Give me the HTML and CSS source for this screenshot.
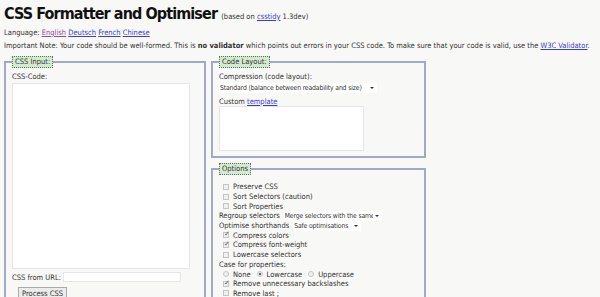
FILE: index.html
```html
<!DOCTYPE html>
<html lang="en">
<head>
    <meta charset="UTF-8">
    <title>CSS Formatter and Optimiser</title>
    <link rel="stylesheet" href="styles.css">
</head>
<body>
<h1>CSS Formatter and Optimiser <small>(based on <a href="#">csstidy</a> 1.3dev)</small></h1>

<p class="lang">Language: <a href="#" class="visited">English</a> <a href="#">Deutsch</a> <a href="#">French</a> <a href="#">Chinese</a></p>

<p class="note">Important Note: Your code should be well-formed. This is <b>no validator</b> which points out errors in your CSS code. To make sure that your code is valid, use the <a href="#">W3C Validator</a>.</p>

<div class="columns">
    <fieldset class="input-box">
        <legend>CSS Input:</legend>
        <label class="block">CSS-Code:</label>
        <textarea class="code"></textarea>
        <div class="url-row">
            <label>CSS from URL:</label>
            <input type="text" class="url">
        </div>
        <button type="button">Process CSS</button>
    </fieldset>

    <div class="side">
        <fieldset class="layout-box">
            <legend>Code Layout:</legend>
            <label class="block">Compression (code layout):</label>
            <span class="select wide"><select><option>Standard (balance between readability and size)</option></select></span>
            <label class="block custom">Custom <a href="#">template</a></label>
            <textarea class="template"></textarea>
        </fieldset>

        <fieldset class="options-box">
            <legend>Options</legend>
            <div class="opt"><input type="checkbox"><label>Preserve CSS</label></div>
            <div class="opt"><input type="checkbox"><label>Sort Selectors (caution)</label></div>
            <div class="opt"><input type="checkbox"><label>Sort Properties</label></div>
            <div class="opt plain"><label>Regroup selectors</label>
                <span class="select regroup"><select><option>Merge selectors with the same properties</option></select></span></div>
            <div class="opt plain"><label>Optimise shorthands</label>
                <span class="select short"><select><option>Safe optimisations</option></select></span></div>
            <div class="opt"><input type="checkbox" checked><label>Compress colors</label></div>
            <div class="opt"><input type="checkbox" checked><label>Compress font-weight</label></div>
            <div class="opt"><input type="checkbox"><label>Lowercase selectors</label></div>
            <div class="opt plain"><label>Case for properties:</label></div>
            <div class="opt radios">
                <input type="radio" name="case"><label>None</label>
                <input type="radio" name="case" checked><label>Lowercase</label>
                <input type="radio" name="case"><label>Uppercase</label>
            </div>
            <div class="opt"><input type="checkbox" checked><label>Remove unnecessary backslashes</label></div>
            <div class="opt"><input type="checkbox"><label>Remove last ;</label></div>
            <div class="opt"><input type="checkbox"><label>Discard invalid properties</label>
                <span class="select level"><select><option>CSS2.1</option></select></span></div>
        </fieldset>
    </div>
</div>
</body>
</html>
```

FILE: styles.css
```css
body {
    margin: 0;
    padding: 5px 4px;
    background-color: #f8f8f6;
    color: #333;
    font-family: "DejaVu Sans Condensed", "DejaVu Sans", Verdana, sans-serif;
    font-size: 7.5px;
}
a {
    color: #3b3bd6;
}
a.visited {
    color: #8d4a9e;
}
h1 {
    margin: 0;
    font-size: 16px;
    line-height: 18px;
    font-weight: bold;
    letter-spacing: -0.9px;
    color: #111;
}
h1 small {
    font-size: 7.5px;
    font-weight: normal;
    letter-spacing: 0;
    color: #333;
}
.lang {
    margin: 2px 0 0;
}
.note {
    margin: 4px 0 0;
}
.columns {
    display: flex;
    align-items: flex-start;
    gap: 5px;
    margin-top: 6px;
}
fieldset {
    margin: 0;
    padding: 2px 6px 5px;
    border: 2px solid #a2a9c8;
}
legend {
    padding: 0 2px;
    background-color: #d3ead0;
    border: 1px dotted #4f7a48;
    line-height: 10px;
}
.input-box {
    width: 186px;
}
.side {
    display: flex;
    flex-direction: column;
    gap: 5px;
}
.layout-box, .options-box {
    width: 199px;
}
.block {
    display: block;
    margin-top: 2px;
}
textarea, input.url {
    display: block;
    border: 1px solid #e6e6e6;
    background: #fff;
    resize: none;
    padding: 0;
}
.code {
    width: 176px;
    height: 184px;
    margin-top: 2px;
}
.url-row {
    display: flex;
    align-items: center;
    gap: 2px;
    margin-top: 3px;
}
input.url {
    width: 116px;
    height: 8px;
}
button {
    margin: 5px 0 0 6px;
    padding: 0 3px;
    height: 12px;
    font-family: inherit;
    font-size: 7.5px;
    color: #333;
    background: #ececec;
    border: 1px solid #aaa;
}
.select {
    position: relative;
    display: inline-block;
    background: #fff;
}
.select select {
    -webkit-appearance: none;
    appearance: none;
    border: none;
    background: transparent;
    font-family: inherit;
    font-size: 6.8px;
    letter-spacing: -0.15px;
    color: #333;
    height: 10px;
    padding: 0 9px 0 1px;
    width: 100%;
}
.select::after {
    content: "";
    position: absolute;
    right: 3px;
    top: 4px;
    border-left: 2px solid transparent;
    border-right: 2px solid transparent;
    border-top: 2px solid #333;
}
.wide {
    width: 158px;
    margin-top: 2px;
}
.custom {
    margin-top: 4px;
}
.template {
    width: 143px;
    height: 43px;
    margin-top: 0;
}
.options-box {
    padding-top: 7px;
}
.opt {
    display: flex;
    align-items: center;
    height: 9.7px;
    padding-left: 4px;
}
.opt.plain {
    padding-left: 0;
}
.opt input[type=checkbox], .opt input[type=radio] {
    -webkit-appearance: none;
    appearance: none;
    width: 6px;
    height: 6px;
    margin: 0 4px 0 0;
    border: 1px solid #c4c4c4;
    background: #f0f0f0;
    position: relative;
}
.opt input[type=radio] {
    border-radius: 50%;
}
.opt input[type=checkbox]:checked::after {
    content: "✓";
    position: absolute;
    left: 0;
    top: -3px;
    font-size: 7px;
    color: #555;
}
.opt input[type=radio]:checked::after {
    content: "";
    position: absolute;
    left: 1px;
    top: 1px;
    width: 2px;
    height: 2px;
    border-radius: 50%;
    background: #333;
}
.radios label {
    margin-right: 6px;
}
.regroup {
    width: 98px;
    margin-left: 4px;
}
.short {
    width: 68px;
    margin-left: 4px;
}
.level {
    width: 34px;
    margin-left: 20px;
}
```
